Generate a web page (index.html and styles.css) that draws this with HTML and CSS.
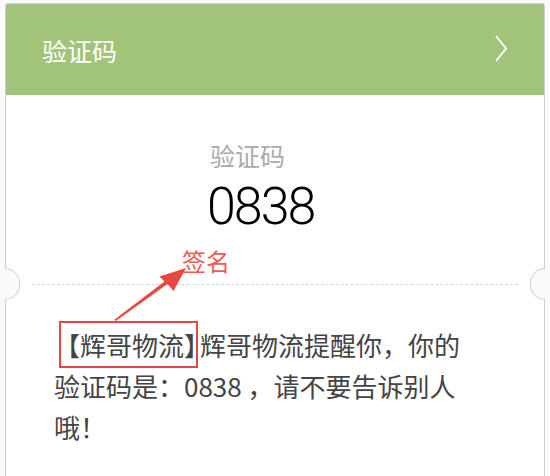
FILE: index.html
```html
<!DOCTYPE html>
<html lang="zh-CN">
<head>
    <meta charset="UTF-8">
    <meta name="viewport" content="width=device-width, initial-scale=1.0">
    <title>验证码</title>
    <link rel="stylesheet" href="styles.css">
</head>
<body>
    <div class="card">
        <div class="card-head">
            <span class="card-title">验证码</span>
            <svg class="chevron" width="14" height="28" viewBox="0 0 14 28">
                <polyline points="2,1 12,13.5 2,26" fill="none" stroke="#fff" stroke-width="2"/>
            </svg>
        </div>

        <div class="code-box">
            <div class="code-label">验证码</div>
            <div class="code-num">0838</div>
        </div>

        <div class="divider"></div>

        <p class="message"><span class="sign">【辉哥物流】</span>辉哥物流提醒你，你的验证码是：0838 ，请不要告诉别人哦！</p>

        <!-- annotation -->
        <span class="note">签名</span>
        <svg class="note-arrow" width="540" height="476" viewBox="0 0 540 476">
            <polygon points="109.8,317 161.5,280 167.5,287 180,264 153.5,272.5 158.5,277.5 108.6,315.6" fill="#e8473f"/>
        </svg>
    </div>
</body>
</html>
```

FILE: styles.css
```css
body {
    margin: 0;
    padding: 3px 5px 0 5px;
    background-color: #fafafa;
    font-family: "Noto Sans CJK SC", "Noto Sans", sans-serif;
}
.card {
    position: relative;
    height: 520px;
    background-color: #fff;
    border: 1px solid #cfcfcf;
    border-radius: 3px 3px 0 0;
}
.card-head {
    height: 91px;
    background-color: #a1c47a;
    display: flex;
    align-items: center;
    justify-content: space-between;
    padding: 0 36px 0 36px;
}
.card-title {
    color: #fff;
    font-size: 25px;
    line-height: 30px;
}
.chevron {
    display: block;
    margin-top: -2px;
}
.code-box {
    padding: 45px 0 0 204px;
    height: 144px;
    box-sizing: border-box;
}
.code-label {
    color: #aaa;
    font-size: 25px;
    line-height: 30px;
}
.code-num {
    font-family: Roboto, "Liberation Sans", sans-serif;
    font-weight: 300;
    color: #000;
    font-size: 52px;
    letter-spacing: -2px;
    line-height: 74px;
    margin-left: -3px;
}
.divider {
    position: relative;
    height: 0;
    margin: 45px 26px 0 26px;
    border-top: 1px dashed #d6d6d6;
}
.card::before,
.card::after {
    content: "";
    position: absolute;
    top: 264px;
    width: 14px;
    height: 30px;
    background-color: #fafafa;
    border: 1px solid #cfcfcf;
}
.card::before {
    left: -1px;
    border-left: none;
    border-radius: 0 16px 16px 0;
}
.card::after {
    right: -1px;
    border-right: none;
    border-radius: 16px 0 0 16px;
}
.message {
    margin: 0;
    padding: 39px 80px 0 48px;
    color: #444;
    font-size: 26px;
    line-height: 41px;
}
.sign {
    position: relative;
    margin-right: -10px;
}
.sign::after {
    content: "";
    position: absolute;
    left: 5px;
    right: 12px;
    top: -5px;
    bottom: -5px;
    border: 2px solid #e8473f;
}
.note {
    position: absolute;
    left: 176px;
    top: 242px;
    color: #ec5a52;
    font-size: 24px;
    line-height: 30px;
}
.note-arrow {
    position: absolute;
    left: 0;
    top: 0;
}
```
